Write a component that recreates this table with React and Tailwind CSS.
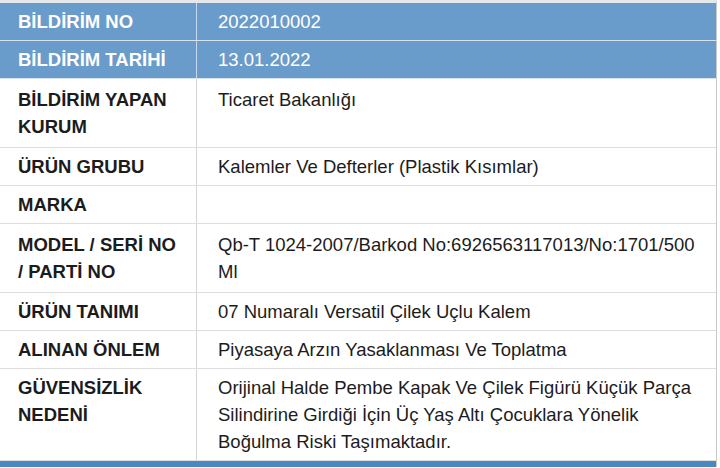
import React from "react";

const rows = [
  { label: "BİLDİRİM NO", value: "2022010002", head: true },
  { label: "BİLDİRİM TARİHİ", value: "13.01.2022", head: true },
  { label: "BİLDİRİM YAPAN KURUM", value: "Ticaret Bakanlığı", tall: true },
  { label: "ÜRÜN GRUBU", value: "Kalemler Ve Defterler (Plastik Kısımlar)" },
  { label: "MARKA", value: "" },
  {
    label: "MODEL / SERİ NO / PARTİ NO",
    value: "Qb-T 1024-2007/Barkod No:6926563117013/No:1701/500 Ml",
    tall: true,
  },
  { label: "ÜRÜN TANIMI", value: "07 Numaralı Versatil Çilek Uçlu Kalem" },
  { label: "ALINAN ÖNLEM", value: "Piyasaya Arzın Yasaklanması Ve Toplatma" },
  {
    label: "GÜVENSİZLİK NEDENİ",
    value:
      "Orijinal Halde Pembe Kapak Ve Çilek Figürü Küçük Parça Silindirine Girdiği İçin Üç Yaş Altı Çocuklara Yönelik Boğulma Riski Taşımaktadır.",
  },
];

export default function App() {
  return (
    <div className="w-[720px] h-[468px] bg-white overflow-hidden font-['Liberation_Sans',Arial,sans-serif] text-[18.5px] leading-[27px]">
      <div className="w-[717px] border-t-[3px] border-t-[#e6e9ec] border-r border-r-[#c9c9c9]">
        {rows.map((r) => (
          <div
            key={r.label}
            className={
              r.head
                ? "grid grid-cols-[197px_1fr] bg-[#6a9ccb] text-white border-b border-[#d6e4f1]"
                : "grid grid-cols-[197px_1fr] text-[#1c1c1c] border-b border-[#dedede]"
            }
          >
            <div
              className={
                r.head
                  ? "pl-[18px] pr-[20px] py-[5px] font-bold border-r border-[#c6d8ea]"
                  : r.tall
                  ? "pl-[18px] pr-[20px] py-[7px] font-bold border-r border-[#d4d4d4]"
                  : "pl-[18px] pr-[20px] py-[5px] font-bold border-r border-[#d4d4d4]"
              }
            >
              {r.label}
            </div>
            <div
              className={
                r.tall
                  ? "pl-[21px] pr-4 py-[7px]"
                  : "pl-[21px] pr-4 py-[5px]"
              }
            >
              {r.value}
            </div>
          </div>
        ))}
        <div className="h-[6px] bg-[#4a88c2]" />
      </div>
    </div>
  );
}
